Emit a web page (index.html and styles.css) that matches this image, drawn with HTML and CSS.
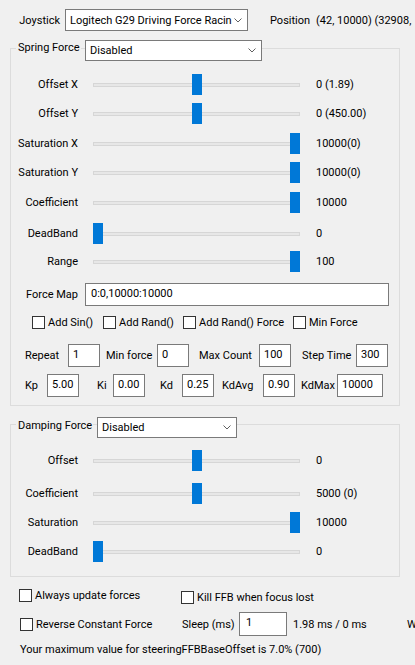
FILE: index.html
```html
<!DOCTYPE html>
<html>
<head>
<meta charset="utf-8">
<title>FFB</title>
<link rel="stylesheet" href="styles.css">
</head>
<body>
<div class="app">
  <div class="toprow">
    <span class="joylbl">Joystick</span>
    <div class="combo combo-joy"><span>Logitech G29 Driving Force Racin</span><svg class="chev" width="8" height="5" viewBox="0 0 8 5"><path d="M0.5 0.5 L4 4 L7.5 0.5" fill="none" stroke="#606060" stroke-width="1"/></svg></div>
    <span class="poslbl">Position</span>
    <span class="posval">(42, 10000) (32908,</span>
  </div>

  <div class="group spring">
    <div class="ghead">
      <span class="gtitle">Spring Force</span>
      <div class="combo combo-spring"><span>Disabled</span><svg class="chev" width="8" height="5" viewBox="0 0 8 5"><path d="M0.5 0.5 L4 4 L7.5 0.5" fill="none" stroke="#606060" stroke-width="1"/></svg></div>
    </div>
    <div class="rows">
      <div class="srow h30"><span class="slbl">Offset X</span><div class="slider"><div class="track"></div><div class="thumb" style="left:99px"></div></div><span class="sval">0 (1.89)</span></div>
      <div class="srow h29"><span class="slbl">Offset Y</span><div class="slider"><div class="track"></div><div class="thumb" style="left:99px"></div></div><span class="sval">0 (450.00)</span></div>
      <div class="srow h30"><span class="slbl">Saturation X</span><div class="slider"><div class="track"></div><div class="thumb" style="left:197px"></div></div><span class="sval">10000(0)</span></div>
      <div class="srow h29"><span class="slbl">Saturation Y</span><div class="slider"><div class="track"></div><div class="thumb" style="left:197px"></div></div><span class="sval">10000(0)</span></div>
      <div class="srow h31"><span class="slbl">Coefficient</span><div class="slider"><div class="track"></div><div class="thumb" style="left:197px"></div></div><span class="sval">10000</span></div>
      <div class="srow h31"><span class="slbl">DeadBand</span><div class="slider"><div class="track"></div><div class="thumb" style="left:0px"></div></div><span class="sval">0</span></div>
      <div class="srow h25"><span class="slbl">Range</span><div class="slider"><div class="track"></div><div class="thumb" style="left:197px"></div></div><span class="sval">100</span></div>
    </div>
    <div class="frow">
      <span class="slbl">Force Map</span>
      <div class="tb tb-map">0:0,10000:10000</div>
    </div>
    <div class="crow">
      <label class="cb w71"><span class="box"></span>Add Sin()</label>
      <label class="cb w80"><span class="box"></span>Add Rand()</label>
      <label class="cb w110"><span class="box"></span>Add Rand() Force</label>
      <label class="cb"><span class="box"></span>Min Force</label>
    </div>
    <div class="prow prow1">
      <span class="pl l-repeat">Repeat</span><div class="tb tb32">1</div>
      <span class="pl l-minf">Min force</span><div class="tb tb32">0</div>
      <span class="pl l-maxc">Max Count</span><div class="tb tb32">100</div>
      <span class="pl l-step">Step Time</span><div class="tb tb32">300</div>
    </div>
    <div class="prow prow2">
      <span class="pl l-kp">Kp</span><div class="tb tb32">5.00</div>
      <span class="pl l-ki">Ki</span><div class="tb tb32">0.00</div>
      <span class="pl l-kd">Kd</span><div class="tb tb32">0.25</div>
      <span class="pl l-kdavg">KdAvg</span><div class="tb tb32">0.90</div>
      <span class="pl l-kdmax">KdMax</span><div class="tb tb46">10000</div>
    </div>
  </div>

  <div class="group damp">
    <div class="ghead">
      <span class="gtitle">Damping Force</span>
      <div class="combo combo-damp"><span>Disabled</span><svg class="chev" width="8" height="5" viewBox="0 0 8 5"><path d="M0.5 0.5 L4 4 L7.5 0.5" fill="none" stroke="#606060" stroke-width="1"/></svg></div>
    </div>
    <div class="rows">
      <div class="srow h29"><span class="slbl">Offset</span><div class="slider"><div class="track"></div><div class="thumb" style="left:99px"></div></div><span class="sval">0</span></div>
      <div class="srow h29 gap4"><span class="slbl">Coefficient</span><div class="slider"><div class="track"></div><div class="thumb" style="left:99px"></div></div><span class="sval">5000 (0)</span></div>
      <div class="srow h29"><span class="slbl">Saturation</span><div class="slider"><div class="track"></div><div class="thumb" style="left:197px"></div></div><span class="sval">10000</span></div>
      <div class="srow h29"><span class="slbl">DeadBand</span><div class="slider"><div class="track"></div><div class="thumb" style="left:0px"></div></div><span class="sval">0</span></div>
    </div>
  </div>

  <div class="brow1">
    <label class="cb w162"><span class="box"></span>Always update forces</label>
    <label class="cb kill"><span class="box"></span>Kill FFB when focus lost</label>
  </div>
  <div class="brow2">
    <label class="cb w162"><span class="box"></span>Reverse Constant Force</label>
    <span class="sleeplbl">Sleep (ms)</span>
    <div class="tb tb-sleep">1</div>
    <span class="timing">1.98 ms / 0 ms</span>
    <span class="wtext">W</span>
  </div>
  <div class="brow3">Your maximum value for steeringFFBBaseOffset is 7.0% (700)</div>
</div>
</body>
</html>
```

FILE: styles.css
```css
* { box-sizing: border-box; }
html, body { margin: 0; padding: 0; }
body {
  width: 415px;
  height: 665px;
  overflow: hidden;
  background: #f0f0f0;
  font-family: Roboto, "Liberation Sans", Arial, sans-serif;
  font-size: 11px;
  color: #000;
}
.app { width: 415px; white-space: nowrap; }

/* top row */
.toprow { display: flex; align-items: center; height: 22px; margin-top: 9px; }
.joylbl { width: 60px; text-align: right; margin-right: 5px; flex: none; }
.combo {
  display: flex; align-items: center; justify-content: space-between;
  background: #fff; border: 1px solid #7a7a7a; height: 22px;
  padding: 0 5px 0 4px; flex: none;
}
.chev { flex: none; display: block; }
.combo-joy { width: 183px; }
.poslbl { margin-left: 22px; width: 46px; flex: none; }
.posval { flex: none; }

/* group boxes */
.group { width: 390px; margin-left: 10px; border: 1px solid #dcdcdc; }
.spring { margin-top: 17px; padding-bottom: 8px; }
.damp { margin-top: 18px; padding-bottom: 10px; }
.ghead { display: flex; align-items: flex-start; height: 21px; margin-top: -9px; padding-left: 5px; }
.damp .ghead { margin-top: -8px; }
.gtitle { background: #f0f0f0; line-height: 15px; padding-left: 2px; flex: none; }
.spring .gtitle { width: 65px; }
.damp .gtitle { width: 77px; margin-top: 1px; }
.combo-spring { width: 177px; height: 21px; margin-left: 4px; }
.combo-damp { width: 140px; height: 21px; margin-left: 4px; }

/* slider rows */
.rows { padding-top: 8px; }
.srow { display: flex; align-items: center; height: 30px; }
.h25 { height: 25px; }
.h29 { height: 29px; }
.h30 { height: 30px; }
.h31 { height: 31px; }
.gap4 { margin-top: 4px; }
.slbl { width: 67px; text-align: right; flex: none; }
.slider { position: relative; width: 207px; height: 21px; margin-left: 15px; flex: none; }
.track {
  position: absolute; left: 0; right: 0; top: 9px; height: 4px;
  background: #e7e7e7; border: 1px solid #d6d6d6;
}
.thumb { position: absolute; top: 0; width: 10px; height: 21px; background: #0078d7; }
.sval { margin-left: 16px; flex: none; }

/* text boxes */
.tb {
  background: #fff; border: 1px solid #7a7a7a; height: 23px;
  padding: 2px 0 0 4px; line-height: 16px; flex: none;
}
.tb32 { width: 32px; }
.tb46 { width: 46px; }
.frow { display: flex; align-items: center; height: 23px; margin-top: 9px; }
.tb-map { width: 304px; margin-left: 7px; padding-left: 5px; }

/* checkboxes */
.cb { display: flex; align-items: center; flex: none; }
.box { width: 13px; height: 13px; border: 1px solid #333; background: #fff; margin-right: 3px; flex: none; }
.crow { display: flex; align-items: center; height: 13px; margin-top: 10px; padding-left: 21px; }
.w71 { width: 71px; }
.w80 { width: 80px; }
.w110 { width: 110px; }
.w162 { width: 162px; }

/* parameter rows */
.prow { display: flex; align-items: center; height: 23px; padding-left: 14px; }
.prow1 { margin-top: 15px; }
.prow2 { margin-top: 7px; }
.pl { flex: none; }
.l-repeat { width: 43px; }
.l-minf { width: 57px; padding-left: 6px; }
.l-maxc { width: 70px; padding-left: 10px; }
.l-step { width: 65px; padding-left: 11px; }
.l-kp { width: 22px; }
.l-ki { width: 34px; padding-left: 18px; }
.l-kd { width: 37px; padding-left: 15px; }
.l-kdavg { width: 49px; padding-left: 8px; }
.l-kdmax { width: 42px; padding-left: 6px; }

/* bottom */
.brow1 { display: flex; align-items: flex-start; height: 17px; margin-top: 12px; padding-left: 19px; }
.kill { margin-top: 2px; }
.brow2 { display: flex; align-items: center; height: 24px; margin-top: 6px; padding-left: 20px; }
.sleeplbl { width: 57px; flex: none; }
.tb-sleep { width: 48px; height: 24px; padding-left: 6px; }
.timing { width: 114px; margin-left: 6px; flex: none; }
.wtext { flex: none; }
.brow3 { margin-top: 6px; padding-left: 20px; line-height: 16px; }
```
